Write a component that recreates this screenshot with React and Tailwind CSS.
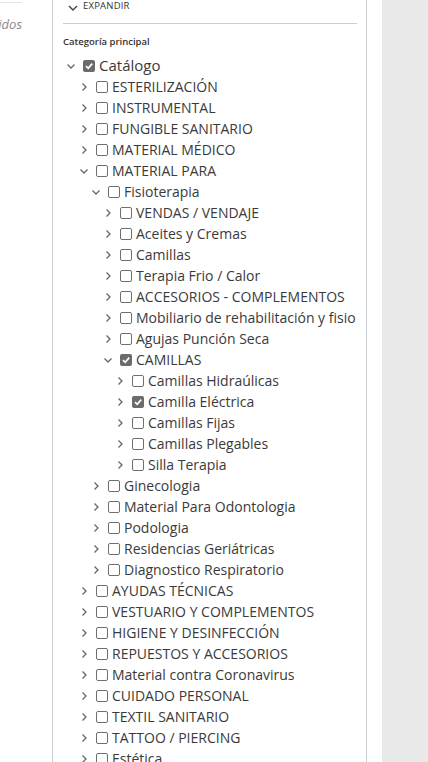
import React from "react";

const tree = [
  [0, "Catálogo", "open", true],
  [1, "ESTERILIZACIÓN"],
  [1, "INSTRUMENTAL"],
  [1, "FUNGIBLE SANITARIO"],
  [1, "MATERIAL MÉDICO"],
  [1, "MATERIAL PARA", "open"],
  [2, "Fisioterapia", "open"],
  [3, "VENDAS / VENDAJE"],
  [3, "Aceites y Cremas"],
  [3, "Camillas"],
  [3, "Terapia Frio / Calor"],
  [3, "ACCESORIOS - COMPLEMENTOS"],
  [3, "Mobiliario de rehabilitación y fisio"],
  [3, "Agujas Punción Seca"],
  [3, "CAMILLAS", "open", true],
  [4, "Camillas Hidraúlicas"],
  [4, "Camilla Eléctrica", "closed", true],
  [4, "Camillas Fijas"],
  [4, "Camillas Plegables"],
  [4, "Silla Terapia"],
  [2, "Ginecologia"],
  [2, "Material Para Odontologia"],
  [2, "Podologia"],
  [2, "Residencias Geriátricas"],
  [2, "Diagnostico Respiratorio"],
  [1, "AYUDAS TÉCNICAS"],
  [1, "VESTUARIO Y COMPLEMENTOS"],
  [1, "HIGIENE Y DESINFECCIÓN"],
  [1, "REPUESTOS Y ACCESORIOS"],
  [1, "Material contra Coronavirus"],
  [1, "CUIDADO PERSONAL"],
  [1, "TEXTIL SANITARIO"],
  [1, "TATTOO / PIERCING"],
  [1, "Estética"],
];

const pads = ["pl-[3px]", "pl-[16px]", "pl-[28px]", "pl-[40px]", "pl-[52px]"];

function Chevron({ open }) {
  return (
    <svg width="10" height="10" viewBox="0 0 10 10" className="shrink-0">
      {open ? (
        <path d="M1.5 3.5 L5 7 L8.5 3.5" fill="none" stroke="#666" strokeWidth="1.3" />
      ) : (
        <path d="M3.5 1.5 L7 5 L3.5 8.5" fill="none" stroke="#666" strokeWidth="1.3" />
      )}
    </svg>
  );
}

function Box({ checked }) {
  if (checked) {
    return (
      <span className="w-[12px] h-[12px] rounded-[2px] bg-[#6b6b6b] flex items-center justify-center shrink-0">
        <svg width="10" height="10" viewBox="0 0 10 10">
          <path d="M2 5.2 L4.2 7.3 L8.2 2.6" fill="none" stroke="#fff" strokeWidth="1.7" />
        </svg>
      </span>
    );
  }
  return <span className="w-[12px] h-[12px] rounded-[2px] border border-[#6f6f6f] bg-white shrink-0" />;
}

export default function App() {
  return (
    <div className="flex w-[428px] h-[762px] overflow-hidden bg-white" style={{ fontFamily: '"Open Sans", sans-serif' }}>
      <div className="w-[52px] shrink-0 relative">
        <div className="h-[3px] w-[22px] border-b border-[#e4e4e4]" />
        <div className="text-right pr-[30px] mt-[12px] text-[13px] italic text-[#8a8a8a] whitespace-nowrap overflow-hidden">
          <span className="float-right">Incluidos</span>
        </div>
      </div>
      <div className="w-[315px] shrink-0 border-l border-r border-[#c9ced2] pl-[10px] pr-[9px]">
        <div className="flex items-center h-[14px] mt-[-1px]">
          <svg width="10" height="8" viewBox="0 0 10 8" className="ml-[5px] mt-[3px]">
            <path d="M1 2 L5 6 L9 2" fill="none" stroke="#444" strokeWidth="1.4" />
          </svg>
          <span className="ml-[5px] text-[9.5px] text-[#333] tracking-[0.2px]">EXPANDIR</span>
        </div>
        <div className="mt-[10px] border-t border-[#c9ced2]" />
        <div className="mt-[11px] text-[9.5px] font-semibold text-[#333] leading-[14px]">Categoría principal</div>
        <div className="mt-[6px]">
          {tree.map(([lvl, label, state, checked], i) => (
            <div key={i} className={`flex items-center h-[21px] whitespace-nowrap ${pads[lvl]}`}>
              <Chevron open={state === "open"} />
              <span className="ml-[7px] flex"><Box checked={checked} /></span>
              <span className={`ml-[4px] text-[#3a3a3a] ${lvl === 0 ? "text-[15px]" : "text-[14px]"}`}>{label}</span>
            </div>
          ))}
        </div>
      </div>
      <div className="w-[15px] shrink-0" />
      <div className="flex-1 bg-[#e9e9ea]" />
    </div>
  );
}
